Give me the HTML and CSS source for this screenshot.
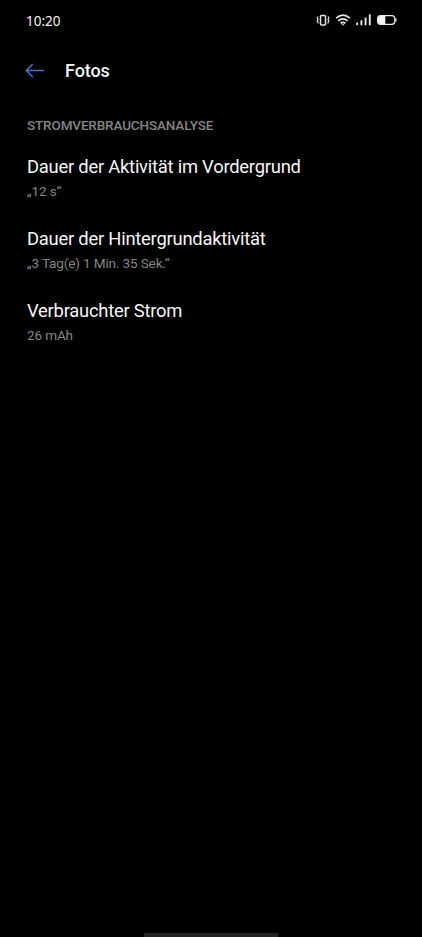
FILE: index.html
```html
<!DOCTYPE html>
<html lang="de">
<head>
  <meta charset="UTF-8">
  <meta name="viewport" content="width=device-width, initial-scale=1.0">
  <title>Fotos</title>
  <link rel="stylesheet" href="styles.css">
</head>
<body>
  <!-- Status Bar -->
  <div class="status-bar">
    <span class="time">10:20</span>
    <svg class="status-icons" width="84" height="16" viewBox="0 0 84 16" fill="none" stroke="#e6e6e6">
      <!-- Vibrate -->
      <rect x="4.500" y="3.500" width="5" height="9.500" rx="1" stroke-width="1.500"/>
      <path d="M2 4.500l-.8 1.500l.8 1.500l-.8 1.500l.8 1.500v1M12 4.500l.8 1.500l-.8 1.500l.8 1.500l-.8 1.500v1" stroke-width="1.200"/>
      <!-- Wifi -->
      <path d="M20.200 6.100q6.800-5.800 13.600 0M22.300 8.800q4.700-3.800 9.400 0M24.600 11.200q2.400-1.800 4.800 0" stroke-width="1.700"/>
      <path d="M25.400 12.200h3.200L27 13.700z" fill="#e6e6e6" stroke="none"/>
      <!-- Signal -->
      <path d="M41.200 13.300v-2.800M45.400 13.300v-5M49.600 13.300v-7.800M53.800 13.300v-11" stroke-width="1.900"/>
      <!-- Battery -->
      <rect x="61.600" y="3.600" width="17.200" height="8.700" rx="3" stroke-width="1.300"/>
      <path d="M64.500 4H69.300v8H64.500q-2.500 0-2.500-2.500v-3q0-2.500 2.500-2.500z" fill="#f2f2f2" stroke="none"/>
      <path d="M80 6.500v3" stroke-width="1.200"/>
    </svg>
  </div>

  <!-- Header Section -->
  <header>
    <a class="back" href="#" aria-label="Zurück">
      <svg width="20" height="16" viewBox="0 0 20 16" fill="none" stroke="#4272dc" stroke-width="1.500">
        <path d="M19 7.500H1.300M7.800 1L1.300 7.500L7.800 14"/>
      </svg>
    </a>
    <h1>Fotos</h1>
  </header>

  <!-- Power Usage Section -->
  <main>
    <h2>STROMVERBRAUCHSANALYSE</h2>
    <div class="item">
      <h3>Dauer der Aktivität im Vordergrund</h3>
      <p>„12 s“</p>
    </div>
    <div class="item">
      <h3>Dauer der Hintergrundaktivität</h3>
      <p>„3 Tag(e) 1 Min. 35 Sek.“</p>
    </div>
    <div class="item">
      <h3>Verbrauchter Strom</h3>
      <p>26 mAh</p>
    </div>
  </main>

  <div class="nav-handle"></div>
</body>
</html>
```
FILE: styles.css
```css
/* Global Styles */
* {
  box-sizing: border-box;
  margin: 0;
  padding: 0;
}

body {
  display: flex;
  flex-direction: column;
  height: 100vh;
  overflow: hidden;
  font-family: Roboto, sans-serif;
  color: #f5f5f5;
  background-color: #000;
}

/* Status Bar Styles */
.status-bar {
  display: flex;
  align-items: center;
  justify-content: space-between;
  height: 40px;
  padding: 0 22px 0 26px;
}

.time {
  padding-top: 2px;
  font-family: "Noto Sans", sans-serif;
  font-size: 13.5px;
  line-height: 20px;
}

/* Header Styles */
header {
  display: flex;
  align-items: center;
  height: 61px;
  padding-left: 25px;
}

.back {
  display: flex;
  margin-right: 20px;
}

h1 {
  font-size: 18px;
  font-weight: 500;
  line-height: 24px;
  letter-spacing: -0.1px;
}

/* Power Usage Styles */
main {
  flex: 1;
  padding: 14px 27px 0;
}

h2 {
  margin-bottom: 20px;
  font-size: 13.5px;
  font-weight: 500;
  line-height: 20px;
  letter-spacing: -0.14px;
  color: #848484;
}

.item {
  height: 72.2px;
}

.item h3 {
  font-size: 18.4px;
  font-weight: 400;
  line-height: 24px;
  letter-spacing: -0.24px;
}

.item p {
  margin-top: 2px;
  font-size: 13.6px;
  line-height: 20px;
  letter-spacing: -0.17px;
  color: #848484;
}

/* Navigation Handle */
.nav-handle {
  width: 134px;
  height: 4px;
  margin: 0 auto;
  background-color: #242424;
}
```
